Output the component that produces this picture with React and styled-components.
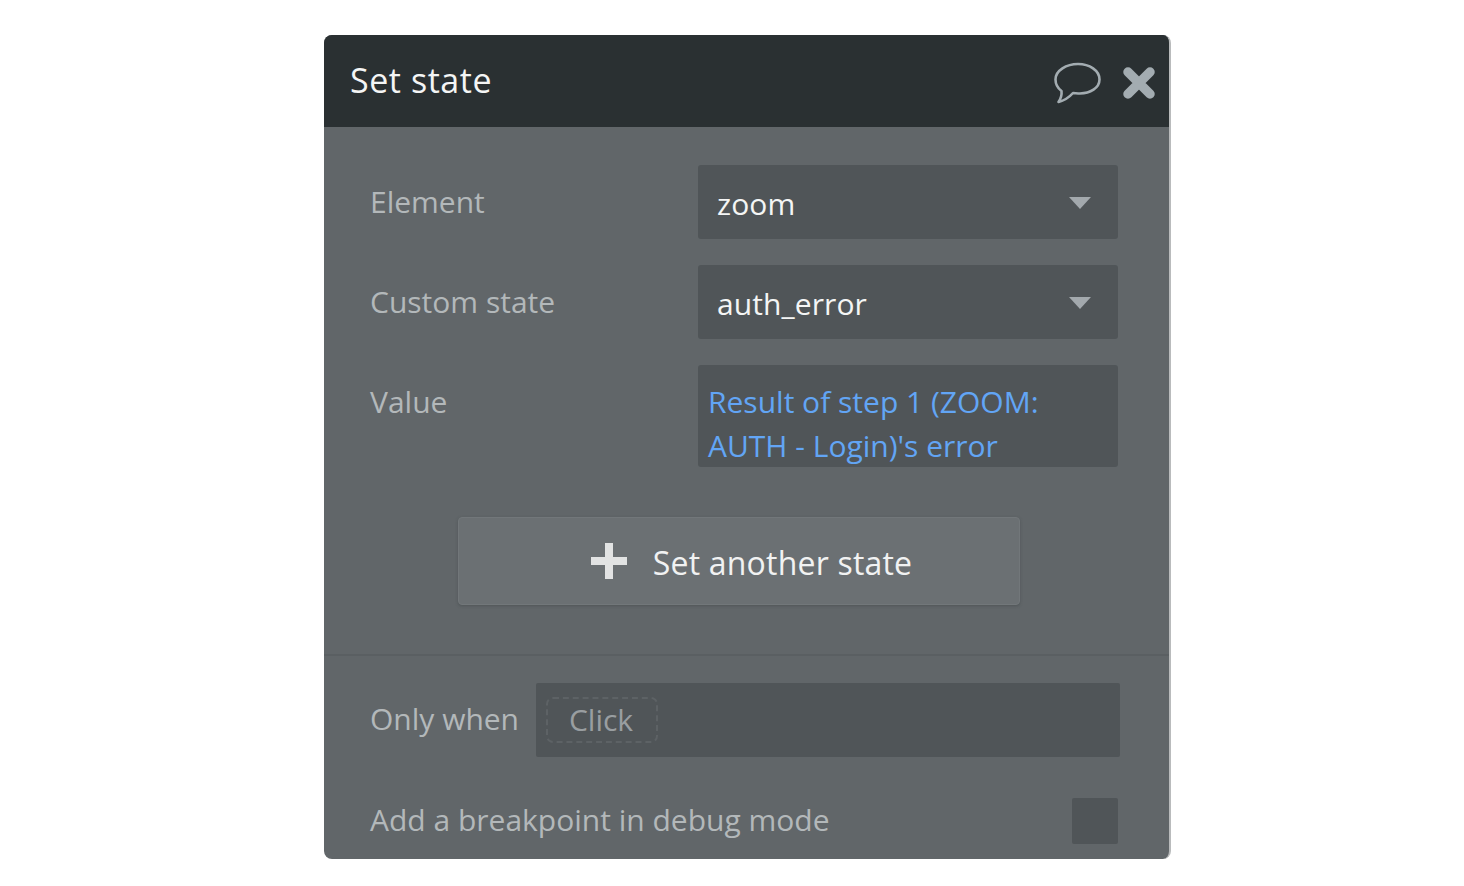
import React from "react";
import styled, { createGlobalStyle } from "styled-components";

const Global = createGlobalStyle`
  html, body { margin: 0; padding: 0; background: #fff; }
  body { font-family: "Open Sans", "Noto Sans", sans-serif; }
`;

const Panel = styled.div`
  box-sizing: border-box;
  width: 847px;
  height: 824px;
  margin: 35px 0 0 324px;
  background: #616669;
  border-radius: 8px;
  border-right: 2px solid #b9bbbc;
  overflow: hidden;
  display: flex;
  flex-direction: column;
`;

const Header = styled.header`
  height: 92px;
  flex: none;
  background: #2a3032;
  display: flex;
  align-items: center;
  padding: 0 14px 0 26px;
  box-sizing: border-box;
`;

const Title = styled.h1`
  margin: 0 auto 2px 0;
  font-size: 34px;
  font-weight: 500;
  letter-spacing: 0.55px;
  color: #f4f5f5;
`;

const HeaderIcons = styled.div`
  display: flex;
  align-items: center;
  gap: 21px;
  margin-top: 3px;
`;

const Form = styled.section`
  padding: 38px 52px 0 46px;
  height: 529px;
  box-sizing: border-box;
  border-bottom: 2px solid #5a5f62;
  flex: none;
`;

const Row = styled.div`
  display: grid;
  grid-template-columns: 328px 420px;
  align-items: ${(p) => (p.$top ? "start" : "center")};
  margin-bottom: 26px;
`;

const Label = styled.label`
  font-size: 30px;
  color: #b3b8ba;
  white-space: nowrap;
  padding-top: ${(p) => (p.$top ? "15px" : "0")};
  line-height: 44px;
`;

const FooterLabel = styled(Label)`
  margin-bottom: 2px;
`;

const Select = styled.div`
  height: 74px;
  background: #505558;
  border-radius: 3px;
  display: flex;
  align-items: center;
  justify-content: space-between;
  padding: 2px 27px 0 19px;
  box-sizing: border-box;
  font-size: 30px;
  letter-spacing: 0.1px;
  color: #f4f5f5;
`;

const Caret = styled.span`
  width: 0;
  height: 0;
  margin-top: 0;
  border-left: 11px solid transparent;
  border-right: 11px solid transparent;
  border-top: 12px solid #a3a9ad;
`;

const Expression = styled.div`
  height: 102px;
  background: #505558;
  border-radius: 3px;
  padding: 15px 10px 0;
  box-sizing: border-box;
  font-size: 30px;
  line-height: 44px;
  color: #62a5f5;
  overflow: hidden;
`;

const AddButton = styled.button`
  display: flex;
  align-items: center;
  justify-content: center;
  gap: 26px;
  width: 562px;
  height: 88px;
  margin: 50px 0 0 88px;
  padding: 0 0 0 25px;
  background: #6b7073;
  border: 1px solid #72777a;
  border-radius: 4px;
  box-shadow: 0 1px 3px rgba(50, 55, 58, 0.35);
  font-family: inherit;
  font-size: 32px;
  letter-spacing: 0.2px;
  color: #f1f2f2;
`;

const ButtonLabel = styled.span`
  margin-top: 2px;
`;

const Footer = styled.section`
  padding: 27px 49px 0 46px;
`;

const WhenRow = styled.div`
  display: flex;
  align-items: center;
  gap: 17px;
  margin-bottom: 41px;
`;

const WhenInput = styled.div`
  flex: 1;
  height: 74px;
  background: #505558;
  border-radius: 2px;
  display: flex;
  align-items: center;
  padding-left: 10px;
`;

const ClickChip = styled.span`
  box-sizing: border-box;
  width: 112px;
  height: 46px;
  padding: 0 2px 2px 0;
  border: 2px dashed #5d6265;
  border-radius: 7px;
  display: flex;
  align-items: center;
  justify-content: center;
  font-size: 30px;
  color: #999ea1;
`;

const BreakRow = styled.div`
  display: flex;
  align-items: center;
  justify-content: space-between;
  padding-right: 2px;
`;

const Checkbox = styled.span`
  width: 46px;
  height: 46px;
  background: #505558;
  border-radius: 2px;
`;

export default function App() {
  return (
    <>
      <Global />
      <Panel>
        <Header>
          <Title>Set state</Title>
          <HeaderIcons>
            <svg width="50" height="42" viewBox="0 0 50 42" fill="none">
              <path
                d="M26 2C37.5 2 47.5 8.5 47.5 17.5C47.5 26 38 31.5 28 31.5C25 31.5 23 31 21 31C17.5 35 12 38.5 6.5 40C8.5 37 10 33 9.5 29C5.5 26 3.5 22 3.5 17.5C3.5 8.5 14.5 2 26 2Z"
                stroke="#a3acb1"
                strokeWidth="2.6"
                strokeLinejoin="round"
              />
            </svg>
            <svg width="32" height="32" viewBox="0 0 32 32">
              <path
                d="M5 5L27 27M27 5L5 27"
                stroke="#a3acb1"
                strokeWidth="9.5"
                strokeLinecap="round"
              />
            </svg>
          </HeaderIcons>
        </Header>
        <Form>
          <Row>
            <Label>Element</Label>
            <Select>
              zoom
              <Caret />
            </Select>
          </Row>
          <Row>
            <Label>Custom state</Label>
            <Select>
              auth_error
              <Caret />
            </Select>
          </Row>
          <Row $top>
            <Label $top>Value</Label>
            <Expression>
              Result of step 1 (ZOOM:
              <br />
              AUTH - Login)'s error
            </Expression>
          </Row>
          <AddButton>
            <svg width="36" height="36" viewBox="0 0 36 36">
              <path d="M14 0h8v14h14v8H22v14h-8V22H0v-8h14z" fill="#e2e3e3" />
            </svg>
            <ButtonLabel>Set another state</ButtonLabel>
          </AddButton>
        </Form>
        <Footer>
          <WhenRow>
            <FooterLabel>Only when</FooterLabel>
            <WhenInput>
              <ClickChip>Click</ClickChip>
            </WhenInput>
          </WhenRow>
          <BreakRow>
            <FooterLabel>Add a breakpoint in debug mode</FooterLabel>
            <Checkbox />
          </BreakRow>
        </Footer>
      </Panel>
    </>
  );
}
